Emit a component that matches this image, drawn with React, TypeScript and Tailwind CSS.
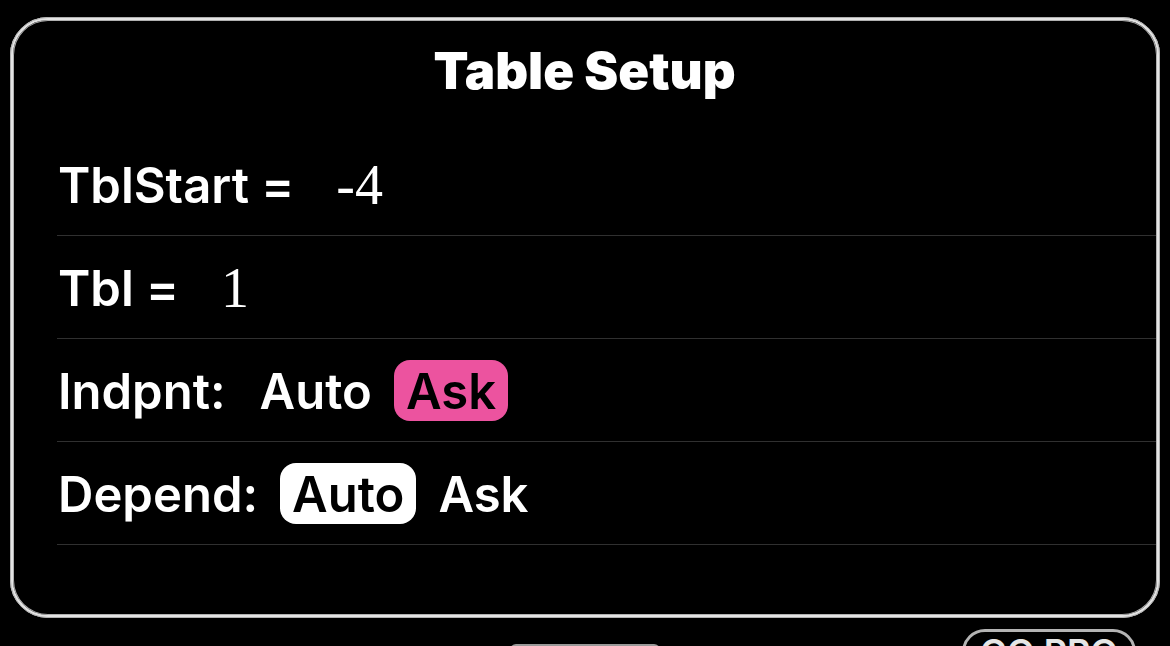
import { useState } from "react";

type Mode = "Auto" | "Ask";

const modes: Mode[] = ["Auto", "Ask"];

const rowClass = "flex h-[103px] items-center border-b border-[#303030] pt-[3px] pb-0.5";
const labelClass = "shrink-0 pt-0.5 pl-px";

function NumberRow({ id, label, initial }: { id: string; label: string; initial: string }) {
  const [value, setValue] = useState(initial);
  return (
    <div className={rowClass}>
      <label htmlFor={id} className={labelClass}>
        {label}
      </label>
      <input
        id={id}
        type="text"
        inputMode="numeric"
        value={value}
        onChange={(e) => setValue(e.target.value)}
        className="ml-[42px] min-w-0 flex-1 bg-transparent font-['Liberation_Serif',serif] text-[56px] leading-[60px] font-normal outline-none"
      />
    </div>
  );
}

function ModeRow({
  id,
  label,
  initial,
  activeClass,
}: {
  id: string;
  label: string;
  initial: Mode;
  activeClass: string;
}) {
  const [mode, setMode] = useState<Mode>(initial);
  return (
    <div className={rowClass} role="group" aria-labelledby={id}>
      <span id={id} className={labelClass}>
        {label}
      </span>
      <div className="ml-[22px] flex gap-2.5">
        {modes.map((m) => (
          <button
            key={m}
            type="button"
            aria-pressed={mode === m}
            onClick={() => setMode(m)}
            className={`h-[61px] rounded-2xl px-3 pt-0.5 ${mode === m ? activeClass : "text-white"}`}
          >
            {m}
          </button>
        ))}
      </div>
    </div>
  );
}

export default function App() {
  return (
    <div className="flex h-screen flex-col overflow-hidden bg-black px-2.5 pt-[17px] font-['Inter',sans-serif] text-[49px] leading-[60px] font-semibold text-white">
      <main className="shrink-0 rounded-[38px] border-[3px] border-[#e4e4e4] pr-px pb-[70px] inset-ring inset-ring-[#b0b0b0] outline-1 -outline-offset-1 outline-[#b0b0b0]">
        <h1 className="pt-[21px] pb-8 text-center text-[51px] font-black">Table Setup</h1>
        <form className="pl-[44px]" onSubmit={(e) => e.preventDefault()}>
          <NumberRow id="tbl-start" label="TblStart =" initial="-4" />
          <NumberRow id="tbl-step" label="Tbl =" initial="1" />
          <ModeRow id="indpnt" label="Indpnt:" initial="Ask" activeClass="bg-[#ec539f] text-black" />
          <ModeRow id="depend" label="Depend:" initial="Auto" activeClass="bg-white text-black" />
        </form>
      </main>
      <footer className="grid shrink-0 grid-cols-3 pt-[11px]">
        <div className="col-start-2 mt-[15px] h-3 w-[150px] justify-self-center rounded-md bg-[#999999]" />
        <button
          type="button"
          className="mr-6 h-[46px] w-[174px] justify-self-end rounded-[23px] border-[3px] border-[#b4b4b4] text-[36px] leading-[38px] font-semibold text-[#e6e6e6]"
        >
          GO PRO
        </button>
      </footer>
    </div>
  );
}
